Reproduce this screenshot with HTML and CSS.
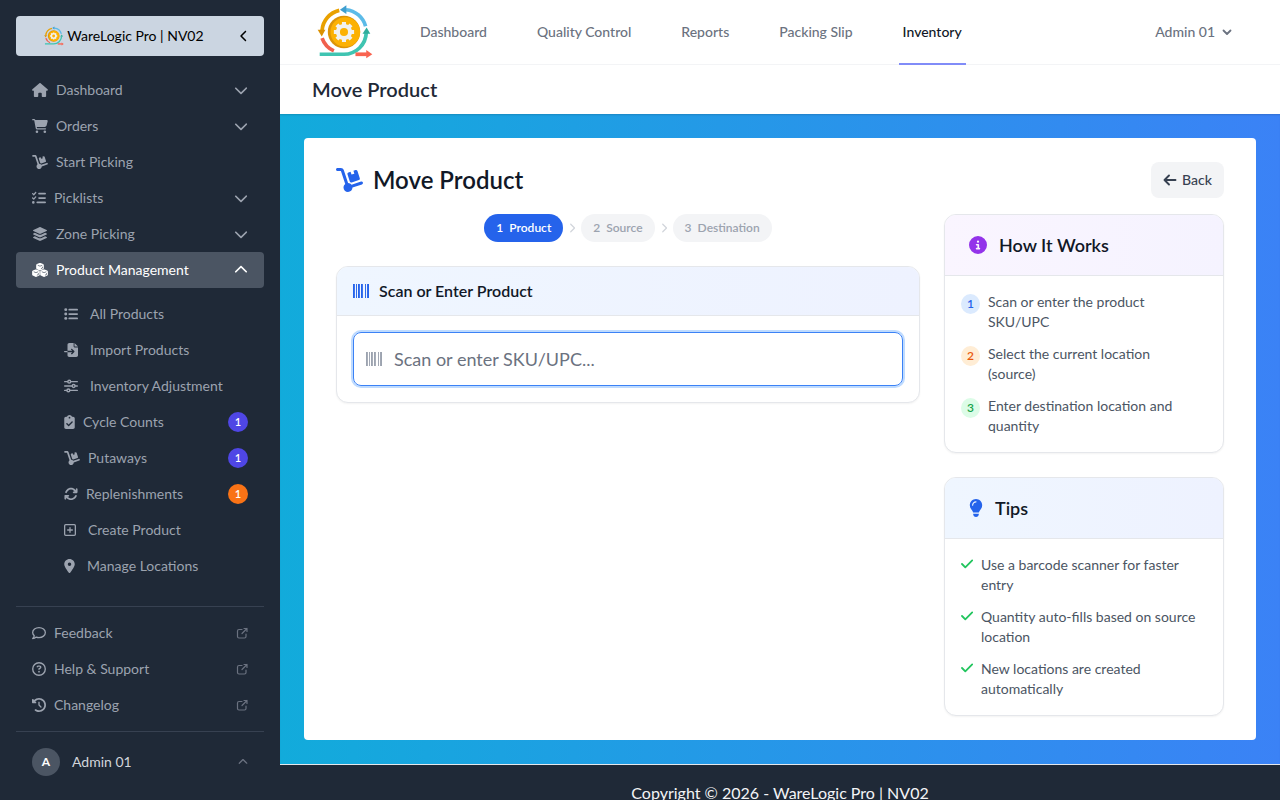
FILE: index.html
```html
<!DOCTYPE html>
<html lang="en">
<head>
<meta charset="utf-8">
<meta name="viewport" content="width=device-width, initial-scale=1">
<title>Move Product</title>
<link rel="stylesheet" href="styles.css">
</head>
<body>
<svg class="sprite" aria-hidden="true">
  <symbol id="down" viewBox="0 0 512 512"><path d="M233.400 406.600c12.500 12.500 32.800 12.500 45.300 0l192-192c12.500-12.500 12.500-32.800 0-45.300s-32.800-12.500-45.300 0L256 338.700 86.600 169.400c-12.500-12.500-32.800-12.500-45.300 0s-12.500 32.800 0 45.300l192 192z"/></symbol>
  <symbol id="house" viewBox="0 0 576 512"><path d="M575.8 255.5c0 18-15 32.1-32 32.1h-32l.7 160.2c0 2.700-.2 5.400-.5 8.100V472c0 22.100-17.900 40-40 40H392c-22.100 0-40-17.900-40-40V384c0-17.700-14.300-32-32-32H256c-17.700 0-32 14.300-32 32v88c0 22.100-17.900 40-40 40H104c-22.100 0-40-17.900-40-40V287.600H32c-18 0-32-14-32-32.100c0-9 3-17 10-24L266.400 8c7-7 15-8 22-8s15 2 21 7L564.800 231.500c8 7 12 15 11 24z"/></symbol>
  <symbol id="cart" viewBox="0 0 576 512"><path d="M0 24C0 10.700 10.700 0 24 0H69.500c22 0 41.500 12.800 50.600 32h411c26.300 0 45.500 25 38.600 50.400l-41 152.300c-8.500 31.400-37 53.300-69.500 53.300H170.700l5.400 28.500c2.200 11.300 12.100 19.500 23.600 19.500H488c13.300 0 24 10.700 24 24s-10.700 24-24 24H199.700c-34.600 0-64.300-24.600-70.700-58.500L77.400 54.500c-.7-3.800-4-6.500-7.900-6.500H24C10.700 48 0 37.300 0 24zM128 464a48 48 0 1 1 96 0 48 48 0 1 1 -96 0zm336-48a48 48 0 1 1 0 96 48 48 0 1 1 0-96z"/></symbol>
  <symbol id="dolly" viewBox="0 0 576 512"><path d="M0 32C0 14.300 14.300 0 32 0h72.900c27.500 0 52 17.600 60.700 43.800L257.700 320c30.100 .5 56.800 14.900 74 37l202.100-67.400c16.800-5.600 34.900 3.500 40.500 20.200s-3.500 34.900-20.200 40.500L352 417.700c-.9 52.200-43.500 94.300-96 94.300c-53 0-96-43-96-96c0-30.800 14.500-58.200 37-75.800L104.900 64H32C14.300 64 0 49.700 0 32zM244.800 134.500c-5.500-16.800 3.700-34.900 20.500-40.300L311 79.400l19.800 60.900 60.900-19.800L371.800 59.600l45.700-14.800c16.800-5.500 34.900 3.700 40.300 20.500l49.400 152.200c5.500 16.800-3.700 34.900-20.500 40.300L334.500 307.200c-16.800 5.500-34.900-3.700-40.300-20.500L244.800 134.500z"/></symbol>
  <symbol id="checklist" viewBox="0 0 512 512"><path d="M152.100 38.200c9.900 8.900 10.700 24 1.800 33.900l-72 80c-4.400 4.900-10.600 7.800-17.200 7.900s-12.900-2.400-17.600-7L7 113C-2.300 103.600-2.300 88.400 7 79s24.600-9.400 33.900 0l22.100 22.100 55.100-61.200c8.900-9.900 24-10.700 33.900-1.800zm0 160c9.900 8.900 10.700 24 1.800 33.900l-72 80c-4.400 4.900-10.600 7.800-17.200 7.900s-12.900-2.400-17.600-7L7 273c-9.400-9.400-9.400-24.600 0-33.900s24.600-9.400 33.900 0l22.100 22.100 55.100-61.200c8.900-9.900 24-10.700 33.900-1.800zM224 96c0-17.700 14.300-32 32-32H480c17.700 0 32 14.300 32 32s-14.300 32-32 32H256c-17.700 0-32-14.300-32-32zm0 160c0-17.700 14.300-32 32-32H480c17.700 0 32 14.300 32 32s-14.300 32-32 32H256c-17.700 0-32-14.300-32-32zM160 416c0-17.700 14.300-32 32-32H480c17.700 0 32 14.300 32 32s-14.300 32-32 32H192c-17.700 0-32-14.300-32-32zM48 368a48 48 0 1 1 0 96 48 48 0 1 1 0-96z"/></symbol>
  <symbol id="layers" viewBox="0 0 576 512"><path d="M264.500 5.200c14.900-6.900 32.100-6.900 47 0l218.600 101c8.500 3.900 13.900 12.400 13.900 21.800s-5.400 17.900-13.900 21.800l-218.600 101c-14.900 6.900-32.100 6.900-47 0L45.900 149.800C37.400 145.800 32 137.300 32 128s5.400-17.900 13.900-21.800L264.500 5.200zM476.900 209.600l53.200 24.600c8.500 3.900 13.900 12.400 13.900 21.800s-5.400 17.900-13.900 21.800l-218.600 101c-14.900 6.900-32.100 6.900-47 0L45.900 277.800C37.400 273.800 32 265.300 32 256s5.400-17.900 13.900-21.800l53.200-24.600 152 70.200c23.400 10.800 50.400 10.800 73.800 0l152-70.200zm-152 198.200l152-70.200 53.200 24.600c8.500 3.900 13.900 12.400 13.900 21.800s-5.400 17.900-13.900 21.800l-218.600 101c-14.900 6.900-32.100 6.900-47 0L45.900 405.800C37.400 401.800 32 393.300 32 384s5.400-17.900 13.900-21.800l53.200-24.600 152 70.200c23.400 10.800 50.400 10.800 73.800 0z"/></symbol>
  <symbol id="cubes" viewBox="0 0 576 512"><g stroke="#4b5563" stroke-width="26" stroke-linejoin="round"><path stroke="none" d="M288 0q12 0 22 4l90 34q28 11 28 40v108q0 27-24 39l-92 42q-24 10-48 0l-92-42q-24-12-24-39V78q0-29 28-40l90-34q10-4 22-4z"/><path fill="none" d="M206 84l82 32 82-32M322 210l56-26v-48"/><path stroke="none" d="M140 236q12 0 22 4l90 34q28 11 28 40v108q0 27-24 39l-92 42q-24 10-48 0l-92-42Q0 449 0 422V314q0-29 28-40l90-34q10-4 22-4zM436 236q12 0 22 4l90 34q28 11 28 40v108q0 27-24 39l-92 42q-24 10-48 0l-92-42q-24-12-24-39V314q0-29 28-40l90-34q10-4 22-4z"/><path fill="none" d="M58 320l82 32 82-32M174 446l56-26v-48M354 320l82 32 82-32M470 446l56-26v-48"/></g></symbol>
  <symbol id="list" viewBox="0 0 512 512"><path fill="none" stroke="currentColor" stroke-width="64" stroke-linecap="round" d="M192 96h288M192 256h288M192 416h288"/><circle cx="64" cy="96" r="54"/><circle cx="64" cy="256" r="54"/><circle cx="64" cy="416" r="54"/></symbol>
  <symbol id="import" viewBox="0 0 512 512"><path d="M128 64c0-35.300 28.700-64 64-64H352V128c0 17.700 14.300 32 32 32H512V448c0 35.300-28.700 64-64 64H192c-35.300 0-64-28.700-64-64V336H302.100l-39 39c-9.400 9.400-9.400 24.600 0 33.900s24.600 9.400 33.900 0l80-80c9.400-9.400 9.400-24.600 0-33.900l-80-80c-9.400-9.400-24.600-9.400-33.900 0s-9.400 24.600 0 33.900l39 39H128V64zm0 224v48H24c-13.300 0-24-10.700-24-24s10.700-24 24-24H128zM512 128H384V0L512 128z"/></symbol>
  <symbol id="sliders" viewBox="0 0 512 512"><g fill="none" stroke="currentColor" stroke-width="52" stroke-linecap="round"><path d="M26 96h102M256 96h230M26 256h262M416 256h70M26 416h70M224 416h262"/><circle cx="192" cy="96" r="52"/><circle cx="352" cy="256" r="52"/><circle cx="160" cy="416" r="52"/></g></symbol>
  <symbol id="clipboard" viewBox="0 0 384 512"><path d="M192 0c-41.800 0-77.400 26.700-90.500 64H64C28.700 64 0 92.700 0 128V448c0 35.300 28.700 64 64 64H320c35.300 0 64-28.700 64-64V128c0-35.300-28.700-64-64-64H282.500C269.400 26.700 233.800 0 192 0zm0 64a32 32 0 1 1 0 64 32 32 0 1 1 0-64zM305 273L177 401c-9.400 9.400-24.600 9.400-33.900 0L79 337c-9.400-9.400-9.400-24.600 0-33.900s24.600-9.400 33.900 0l47 47L271 239c9.400-9.400 24.600-9.400 33.900 0s9.400 24.600 0 33.900z"/></symbol>
  <symbol id="rotate" viewBox="0 0 512 512"><path d="M105.100 202.600c7.700-21.800 20.200-42.300 37.800-59.800c62.500-62.500 163.800-62.500 226.300 0L386.300 160H352c-17.700 0-32 14.300-32 32s14.300 32 32 32H463.900c17.700 0 32-14.300 32-32V80c0-17.700-14.300-32-32-32s-32 14.300-32 32v35.200L414.400 97.600c-87.500-87.500-229.300-87.500-316.800 0C73.200 122 55.600 150.700 44.800 181.400c-5.900 16.700 2.900 34.900 19.500 40.800s34.900-2.900 40.800-19.500zM39 289.300c-5 1.500-9.800 4.200-13.700 8.200c-4 4-6.700 8.800-8.100 14c-.8 3-1.200 6-1.200 8.900V432c0 17.700 14.300 32 32 32s32-14.300 32-32V396.900l17.600 17.500c87.500 87.400 229.300 87.400 316.700 0c24.400-24.400 42.100-53.100 52.900-83.700c5.900-16.700-2.900-34.900-19.500-40.800s-34.900 2.900-40.800 19.500c-7.700 21.800-20.200 42.300-37.800 59.800c-62.500 62.500-163.800 62.500-226.300 0L125.600 352H160c17.700 0 32-14.300 32-32s-14.300-32-32-32H48.400c-3.200 0-6.300 .3-9.400 1.300z"/></symbol>
  <symbol id="plus" viewBox="0 0 448 512"><g fill="none" stroke="currentColor" stroke-width="48" stroke-linecap="round"><rect x="24" y="56" width="400" height="400" rx="40"/><path d="M224 168v176M136 256h176"/></g></symbol>
  <symbol id="pin" viewBox="0 0 384 512"><path d="M215.700 499.200C267 435 384 279.400 384 192C384 86 298 0 192 0S0 86 0 192c0 87.400 117 243 168.300 307.200c12.300 15.300 35.100 15.300 47.400 0zM192 128a64 64 0 1 1 0 128 64 64 0 1 1 0-128z"/></symbol>
  <symbol id="comment" viewBox="0 0 512 512"><path fill="none" stroke="currentColor" stroke-width="48" stroke-linejoin="round" d="M256 56c129 0 232 82 232 184s-103 184-232 184c-36 0-70-6-99-18-30 24-76 50-131 50 30-32 50-64 56-98C46 322 24 284 24 240 24 138 127 56 256 56z"/></symbol>
  <symbol id="question" viewBox="0 0 512 512"><circle cx="256" cy="256" r="230" fill="none" stroke="currentColor" stroke-width="50"/><path d="M169.800 165.300c7.900-22.300 29.100-37.300 52.800-37.300h58.300c34.900 0 63.100 28.300 63.100 63.100c0 22.600-12.100 43.500-31.700 54.800L280 264.400c-.2 13-10.900 23.600-24 23.600c-13.300 0-24-10.700-24-24V250.500c0-8.600 4.600-16.500 12.100-20.800l44.300-25.400c4.700-2.700 7.600-7.700 7.600-13.100c0-8.400-6.800-15.100-15.100-15.100H222.600c-3.400 0-6.400 2.100-7.500 5.300l-.4 1.200c-4.400 12.500-18.200 19-30.600 14.600s-19-18.200-14.600-30.600l.4-1.200zM224 352a32 32 0 1 1 64 0 32 32 0 1 1 -64 0z"/></symbol>
  <symbol id="history" viewBox="0 0 512 512"><path d="M75 75L41 41C25.900 25.900 0 36.600 0 57.900V168c0 13.300 10.700 24 24 24H134.100c21.400 0 32.100-25.900 17-41l-30.800-30.800C155 85.500 203 64 256 64c106 0 192 86 192 192s-86 192-192 192c-40.800 0-78.600-12.700-109.700-34.400c-14.500-10.100-34.400-6.600-44.600 7.900s-6.600 34.400 7.900 44.600C151.200 495 201.700 512 256 512c141.400 0 256-114.600 256-256S397.400 0 256 0C185.300 0 121.300 28.700 75 75zm181 53c-13.300 0-24 10.700-24 24V256c0 6.400 2.500 12.500 7 17l72 72c9.400 9.400 24.600 9.400 33.900 0s9.400-24.600 0-33.900l-65-65V152c0-13.300-10.700-24-24-24z"/></symbol>
  <symbol id="external" viewBox="0 0 12 12"><path fill="none" stroke="currentColor" stroke-width="1.200" stroke-linecap="round" stroke-linejoin="round" d="M6 2.500H3Q1.500 2.500 1.500 4v5.500Q1.500 11 3 11h5.500Q10 11 10 9.500V7M8 1.500h3v3M11 1.500L6 6.500"/></symbol>
  <symbol id="barcode" viewBox="0 0 512 448"><path d="M0 0h60v448H0zM96 0h30v448H96zM160 0h60v448h-60zM256 0h60v448h-60zM384 0h30v448h-30zM450 0h62v448h-62z"/></symbol>
  <symbol id="info" viewBox="0 0 512 512"><path d="M256 512A256 256 0 1 0 256 0a256 256 0 1 0 0 512zM216 336h24V272H216c-13.300 0-24-10.700-24-24s10.700-24 24-24h48c13.300 0 24 10.700 24 24v88h8c13.300 0 24 10.700 24 24s-10.700 24-24 24H216c-13.300 0-24-10.700-24-24s10.700-24 24-24zm40-208a32 32 0 1 1 0 64 32 32 0 1 1 0-64z"/></symbol>
  <symbol id="bulb" viewBox="0 0 384 512"><path d="M272 384c9.600-31.900 29.500-59.100 49.200-86.200c5.200-7.100 10.400-14.200 15.400-21.400c19.800-28.500 31.400-63 31.400-100.300C368 78.800 289.200 0 192 0S16 78.800 16 176c0 37.300 11.600 71.900 31.400 100.300c5 7.200 10.200 14.300 15.400 21.400c19.800 27.100 39.700 54.400 49.200 86.200H272zM192 512c44.200 0 80-35.800 80-80V416H112v16c0 44.200 35.800 80 80 80zM112 176c0 8.800-7.200 16-16 16s-16-7.200-16-16c0-61.900 50.100-112 112-112c8.800 0 16 7.200 16 16s-7.200 16-16 16c-44.200 0-80 35.800-80 80z"/></symbol>
  <symbol id="check" viewBox="0 0 12 14"><path fill="none" stroke="currentColor" stroke-width="1.800" stroke-linecap="round" stroke-linejoin="round" d="M1 7L4.300 10.300 11.200 3.400"/></symbol>
  <symbol id="back" viewBox="0 0 14 14"><path fill="none" stroke="currentColor" stroke-width="1.900" stroke-linecap="round" stroke-linejoin="round" d="M6 2.500L1.500 7 6 11.500M1.500 7h11"/></symbol>
  <symbol id="smalldown" viewBox="0 0 10 10"><path fill="none" stroke="currentColor" stroke-width="1.800" stroke-linecap="round" stroke-linejoin="round" d="M1.500 3.500L5 7l3.500-3.500"/></symbol>
  <symbol id="logo" viewBox="52 16 166 160">
    <g fill="none" stroke-width="11">
      <path stroke="#e9a100" d="M118 32A66 66 0 0 0 67 91"/>
      <path stroke="#5cbbe8" d="M138 30A66 66 0 0 1 196 79"/>
      <path stroke="#f0604d" d="M67 114A66 66 0 0 0 102 152"/>
      <path stroke="#3fc4b1" d="M60 162h72A66 66 0 0 0 198 98"/>
      <path stroke="#f96350" d="M166 162h34"/>
    </g>
    <path fill="#db9000" d="M54 89h23L66 109z"/><path fill="#3f9fd0" d="M139 17v26L120 30z"/>
    <path fill="#2fae9c" d="M187 101h23L199 83z"/><path fill="#f96350" d="M198 149v25l18-12z"/>
    <circle cx="132" cy="96" r="48" fill="#dc9407"/><circle cx="136" cy="96" r="44" fill="#fcb103"/>
    <g stroke="#f1f1f0" stroke-width="12"><path d="M132 66v60M102 96h60M111 75l42 42M153 75l-42 42"/></g>
    <circle cx="132" cy="96" r="24" fill="#f1f1f0"/><circle cx="132" cy="96" r="12" fill="#fcb103"/>
  </symbol>
</svg>

<div class="app">
  <aside class="sidebar">
    <button class="brand" type="button">
      <span class="brand-name"><svg class="i20"><use href="#logo"/></svg>WareLogic Pro | NV02</span>
      <svg class="i12 turn-left"><use href="#down"/></svg>
    </button>
    <nav class="menu" aria-label="Main menu">
      <button class="item" type="button"><svg class="i16"><use href="#house"/></svg><span>Dashboard</span><svg class="i14 end"><use href="#down"/></svg></button>
      <button class="item" type="button"><svg class="i16"><use href="#cart"/></svg><span>Orders</span><svg class="i14 end"><use href="#down"/></svg></button>
      <a class="item" href="#"><svg class="i16"><use href="#dolly"/></svg><span>Start Picking</span></a>
      <button class="item" type="button"><svg class="i14"><use href="#checklist"/></svg><span>Picklists</span><svg class="i14 end"><use href="#down"/></svg></button>
      <button class="item" type="button"><svg class="i16"><use href="#layers"/></svg><span>Zone Picking</span><svg class="i14 end"><use href="#down"/></svg></button>
      <button class="item open" type="button" aria-expanded="true"><svg class="i16"><use href="#cubes"/></svg><span>Product Management</span><svg class="i14 end turn-up"><use href="#down"/></svg></button>
    </nav>
    <nav class="submenu" aria-label="Product Management">
      <a class="item wide" href="#"><svg class="i14"><use href="#list"/></svg><span>All Products</span></a>
      <a class="item wide" href="#"><svg class="i14"><use href="#import"/></svg><span>Import Products</span></a>
      <a class="item wide" href="#"><svg class="i14"><use href="#sliders"/></svg><span>Inventory Adjustment</span></a>
      <a class="item" href="#"><svg class="i11"><use href="#clipboard"/></svg><span>Cycle Counts</span><span class="count">1</span></a>
      <a class="item" href="#"><svg class="i16"><use href="#dolly"/></svg><span>Putaways</span><span class="count">1</span></a>
      <a class="item" href="#"><svg class="i14"><use href="#rotate"/></svg><span>Replenishments</span><span class="count orange">1</span></a>
      <a class="item wide" href="#"><svg class="i12w"><use href="#plus"/></svg><span>Create Product</span></a>
      <a class="item wide" href="#"><svg class="i11"><use href="#pin"/></svg><span>Manage Locations</span></a>
    </nav>
    <nav class="links" aria-label="Support">
      <a class="item" href="#"><svg class="i14"><use href="#comment"/></svg><span>Feedback</span><svg class="i12 end dim"><use href="#external"/></svg></a>
      <a class="item" href="#"><svg class="i14"><use href="#question"/></svg><span>Help &amp; Support</span><svg class="i12 end dim"><use href="#external"/></svg></a>
      <a class="item" href="#"><svg class="i14"><use href="#history"/></svg><span>Changelog</span><svg class="i12 end dim"><use href="#external"/></svg></a>
    </nav>
    <div class="account">
      <button class="account-button" type="button"><span class="avatar">A</span><span>Admin 01</span><svg class="i10 end turn-up dim"><use href="#down"/></svg></button>
    </div>
  </aside>

  <div class="main">
    <header class="topbar">
      <a class="logo" href="#" aria-label="Home"><svg><use href="#logo"/></svg></a>
      <nav class="tabs" aria-label="Sections">
        <a href="#">Dashboard</a><a href="#">Quality Control</a><a href="#">Reports</a><a href="#">Packing Slip</a><a class="current" href="#" aria-current="page">Inventory</a>
      </nav>
      <button class="user" type="button">Admin 01<svg class="i10"><use href="#smalldown"/></svg></button>
    </header>
    <div class="pagehead"><h2>Move Product</h2></div>
    <main class="stage">
      <div class="panel">
        <div class="panel-head">
          <h1><svg><use href="#dolly"/></svg>Move Product</h1>
          <a class="back" href="#"><svg class="i14"><use href="#back"/></svg>Back</a>
        </div>
        <div class="columns">
          <section class="primary">
            <ol class="steps">
              <li class="step active"><span>1</span><span>Product</span></li>
              <li class="sep"><svg class="i10 turn-right"><use href="#down"/></svg></li>
              <li class="step"><span>2</span><span>Source</span></li>
              <li class="sep"><svg class="i10 turn-right"><use href="#down"/></svg></li>
              <li class="step"><span>3</span><span>Destination</span></li>
            </ol>
            <div class="card">
              <div class="card-head blue small"><svg class="code"><use href="#barcode"/></svg><h3>Scan or Enter Product</h3></div>
              <div class="card-body">
                <label class="field"><svg class="code"><use href="#barcode"/></svg><input type="text" placeholder="Scan or enter SKU/UPC..." aria-label="Scan or enter SKU/UPC"></label>
              </div>
            </div>
          </section>
          <aside class="secondary">
            <div class="card">
              <div class="card-head purple"><svg class="i18"><use href="#info"/></svg><h3>How It Works</h3></div>
              <ol class="card-body notes numbered">
                <li><span class="num n1">1</span><span>Scan or enter the product SKU/UPC</span></li>
                <li><span class="num n2">2</span><span>Select the current location (source)</span></li>
                <li><span class="num n3">3</span><span>Enter destination location and quantity</span></li>
              </ol>
            </div>
            <div class="card">
              <div class="card-head blue"><svg class="bulb"><use href="#bulb"/></svg><h3>Tips</h3></div>
              <ul class="card-body notes">
                <li><svg class="tick"><use href="#check"/></svg><span>Use a barcode scanner for faster entry</span></li>
                <li><svg class="tick"><use href="#check"/></svg><span>Quantity auto-fills based on source location</span></li>
                <li><svg class="tick"><use href="#check"/></svg><span>New locations are created automatically</span></li>
              </ul>
            </div>
          </aside>
        </div>
      </div>
    </main>
    <footer class="footer">Copyright © 2026 - WareLogic Pro | NV02</footer>
  </div>
</div>
</body>
</html>
```

FILE: styles.css
```css
* { box-sizing: border-box; }

body {
  margin: 0;
  font: 14px/20px Lato, "Open Sans", sans-serif;
  color: #111827;
  background: #fff;
}

h1, h2, h3, ol, ul { margin: 0; padding: 0; list-style: none; }
h1, h2, h3 { font-weight: 600; }
a { color: inherit; text-decoration: none; }
button { font: inherit; color: inherit; border: 0; background: none; cursor: pointer; }
svg { flex: none; fill: currentColor; }

.sprite { position: absolute; width: 0; height: 0; }
.i10 { width: 10px; height: 10px; }
.i11 { width: 11px; height: 14px; }
.i12 { width: 12px; height: 12px; }
.i12w { width: 12px; height: 14px; }
.i14 { width: 14px; height: 14px; }
.i16 { width: 16px; height: 14px; }
.i18 { width: 18px; height: 18px; }
.i20 { width: 20px; height: 20px; }
.turn-left { transform: rotate(90deg); }
.turn-right { transform: rotate(-90deg); }
.turn-up { transform: rotate(180deg); }
.end { margin-left: auto; }
.dim { color: #6b7280; }

.app { display: flex; height: 100vh; overflow: hidden; }

/* Sidebar */
.sidebar {
  display: flex;
  flex-direction: column;
  flex: none;
  width: 280px;
  padding: 16px;
  background: #1f2937;
  color: #9ca3af;
}
.brand {
  display: flex;
  align-items: center;
  height: 40px;
  padding: 0 14px;
  border-radius: 4px;
  background: #cbd5e1;
  color: #000;
}
.brand-name {
  display: flex;
  flex: 1;
  align-items: center;
  justify-content: center;
  gap: 3px;
  padding-right: 20px;
}
.menu { margin-top: 16px; }
.submenu { margin-top: 8px; padding-left: 32px; }
.item {
  display: flex;
  align-items: center;
  gap: 8px;
  width: 100%;
  height: 36px;
  padding: 0 16px;
  border-radius: 4px;
  text-align: left;
}
.item.wide { gap: 12px; }
.item.open { background: #4b5563; color: #fff; }
.count {
  width: 20px;
  height: 20px;
  margin-left: auto;
  border-radius: 50%;
  background: #4f46e5;
  color: #fff;
  font-size: 11px;
  font-weight: 600;
  text-align: center;
}
.count.orange { background: #f97316; }
.links { margin-top: auto; padding: 8px 0; border-top: 1px solid #374151; }
.account { padding-top: 16px; border-top: 1px solid #374151; }
.account-button {
  display: flex;
  align-items: center;
  gap: 12px;
  width: 100%;
  padding: 0 16px 8px;
  color: #d1d5db;
}
.avatar {
  width: 28px;
  border-radius: 50%;
  background: #4b5563;
  color: #fff;
  font-size: 12px;
  font-weight: 700;
  line-height: 28px;
}

/* Top navigation */
.main { display: flex; flex: 1; flex-direction: column; min-width: 0; }
.topbar {
  display: flex;
  flex: none;
  height: 65px;
  padding: 0 48px 0 37px;
  border-bottom: 1px solid #f3f4f6;
  color: #6b7280;
  font-weight: 500;
}
.logo { display: flex; align-items: center; }
.logo svg { width: 56px; height: 54px; }
.tabs { display: flex; gap: 42px; margin-left: 43px; }
.tabs a { display: flex; align-items: center; height: 65px; padding: 0 4px; border-bottom: 2px solid transparent; }
.tabs .current { border-color: #818cf8; color: #111827; }
.user { display: flex; align-items: center; gap: 7px; margin-left: auto; padding: 0; }
.pagehead { flex: none; padding: 10px 32px 11px; }
.pagehead h2 { color: #1f2937; font-size: 20px; line-height: 28px; }

/* Page body */
.stage {
  flex: none;
  padding: 24px;
  background: linear-gradient(to right, #12abdb, #3b82f6);
  box-shadow: inset 0 2px 2px -1px rgba(0, 0, 0, .15);
}
.panel { padding: 24px 32px; border-radius: 4px; background: #fff; }
.panel-head { display: flex; align-items: center; justify-content: space-between; margin-bottom: 16px; }
.panel-head h1 { display: flex; align-items: center; gap: 10px; font-size: 24px; line-height: 32px; }
.panel-head h1 svg { width: 27px; height: 24px; color: #2563eb; }
.back {
  display: flex;
  align-items: center;
  gap: 5px;
  padding: 8px 12px;
  border-radius: 8px;
  background: #f3f4f6;
  color: #374151;
  font-weight: 500;
}
.columns { display: grid; grid-template-columns: minmax(0, 1fr) 280px; gap: 24px; }
.secondary { display: grid; gap: 24px; }

.steps { display: flex; align-items: center; justify-content: center; gap: 4px; margin-bottom: 24px; }
.step {
  display: flex;
  gap: 6px;
  padding: 4px 12px;
  border-radius: 14px;
  background: #f3f4f6;
  color: #9ca3af;
  font-size: 12px;
  font-weight: 600;
}
.step.active { background: #2563eb; color: #fff; }
.sep { display: flex; color: #d1d5db; }

.card {
  overflow: hidden;
  border: 1px solid #e5e7eb;
  border-radius: 12px;
  background: #fff;
  box-shadow: 0 1px 2px rgba(0, 0, 0, .05);
}
.card-head { display: flex; align-items: center; gap: 12px; padding: 16px 24px; border-bottom: 1px solid #e5e7eb; }
.card-head h3 { font-size: 18px; line-height: 28px; }
.card-head.small { gap: 10px; padding: 12px 16px; }
.card-head.small h3 { font-size: 16px; line-height: 24px; }
.card-head.blue { background: linear-gradient(to right, #eff6ff, #eef2ff); }
.card-head.blue svg { color: #2563eb; }
.card-head.purple { background: linear-gradient(to right, #faf5ff, #f5f3ff); }
.card-head.purple svg { color: #9333ea; }
.card-body { padding: 16px; }
.code { width: 16px; height: 14px; }
.bulb { width: 14px; height: 18px; }

.field {
  display: flex;
  align-items: center;
  gap: 12px;
  height: 54px;
  padding: 0 12px;
  border: 1px solid #3b82f6;
  border-radius: 8px;
  box-shadow: 0 0 0 2px #bfdbfe;
  color: #9ca3af;
}
.field input {
  flex: 1;
  min-width: 0;
  padding: 0;
  border: 0;
  outline: 0;
  background: none;
  color: #111827;
  font: inherit;
  font-size: 18px;
  line-height: 28px;
}
.field input::placeholder { color: #6b7280; opacity: 1; }

.notes { display: grid; gap: 12px; color: #4b5563; }
.notes.numbered { padding-right: 24px; }
.notes li { display: flex; align-items: flex-start; gap: 8px; }
.num {
  flex: none;
  width: 19px;
  height: 20px;
  margin-top: 2px;
  border-radius: 50%;
  font-size: 12px;
  font-weight: 600;
  text-align: center;
}
.n1 { background: #dbeafe; color: #2563eb; }
.n2 { background: #ffedd5; color: #ea580c; }
.n3 { background: #dcfce7; color: #16a34a; }
.tick { width: 12px; height: 14px; margin-top: 2px; color: #22c55e; }

.footer {
  flex: none;
  padding: 16px;
  border-top: 1px solid #e5e7eb;
  background: #1f2937;
  color: #f3f4f6;
  font-size: 16px;
  line-height: 24px;
  text-align: center;
}
```
